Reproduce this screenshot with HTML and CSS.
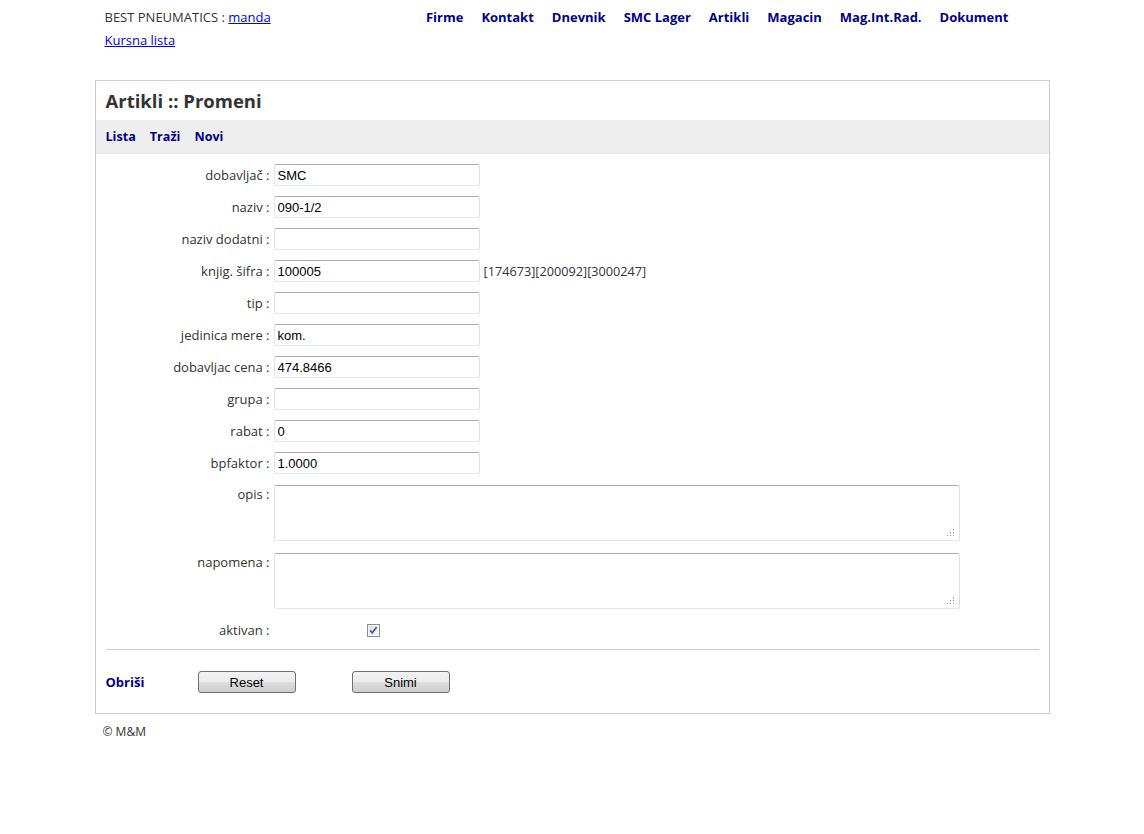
FILE: index.html
```html
<!DOCTYPE html>
<html lang="sr">
<head>
  <meta charset="UTF-8">
  <title>Artikli :: Promeni</title>
  <link rel="stylesheet" href="styles.css">
</head>
<body>
  <div class="page">
    <div class="header">
      <div class="user">
        BEST PNEUMATICS : <a href="#">manda</a><br>
        <a href="#">Kursna lista</a>
      </div>
      <ul class="nav">
        <li><a href="#">Firme</a></li>
        <li><a href="#">Kontakt</a></li>
        <li><a href="#">Dnevnik</a></li>
        <li><a href="#">SMC Lager</a></li>
        <li><a href="#">Artikli</a></li>
        <li><a href="#">Magacin</a></li>
        <li><a href="#">Mag.Int.Rad.</a></li>
        <li><a href="#">Dokument</a></li>
      </ul>
    </div>

    <div class="box">
      <h1>Artikli :: Promeni</h1>
      <div class="toolbar">
        <a href="#">Lista</a>
        <a href="#">Traži</a>
        <a href="#">Novi</a>
      </div>

      <form class="form">
        <div class="row"><label>dobavljač :</label><input type="text" value="SMC"></div>
        <div class="row"><label>naziv :</label><input type="text" value="090-1/2"></div>
        <div class="row"><label>naziv dodatni :</label><input type="text" value=""></div>
        <div class="row"><label>knjig. šifra :</label><input type="text" value="100005"><span class="extra">[174673][200092][3000247]</span></div>
        <div class="row"><label>tip :</label><input type="text" value=""></div>
        <div class="row"><label>jedinica mere :</label><input type="text" value="kom."></div>
        <div class="row"><label>dobavljac cena :</label><input type="text" value="474.8466"></div>
        <div class="row"><label>grupa :</label><input type="text" value=""></div>
        <div class="row"><label>rabat :</label><input type="text" value="0"></div>
        <div class="row"><label>bpfaktor :</label><input type="text" value="1.0000"></div>
        <div class="row tall first">
          <label>opis :</label>
          <span class="area">
            <textarea></textarea>
            <svg class="grip" width="7" height="7" viewBox="0 0 7 7">
              <rect x="6" y="0" width="1" height="1"/>
              <rect x="3" y="3" width="1" height="1"/><rect x="6" y="3" width="1" height="1"/>
              <rect x="0" y="6" width="1" height="1"/><rect x="3" y="6" width="1" height="1"/><rect x="6" y="6" width="1" height="1"/>
              <rect x="6" y="1" width="1" height="1" opacity=".5"/>
              <rect x="3" y="4" width="1" height="1" opacity=".5"/><rect x="6" y="4" width="1" height="1" opacity=".5"/>
            </svg>
          </span>
        </div>
        <div class="row tall">
          <label>napomena :</label>
          <span class="area">
            <textarea></textarea>
            <svg class="grip" width="7" height="7" viewBox="0 0 7 7">
              <rect x="6" y="0" width="1" height="1"/>
              <rect x="3" y="3" width="1" height="1"/><rect x="6" y="3" width="1" height="1"/>
              <rect x="0" y="6" width="1" height="1"/><rect x="3" y="6" width="1" height="1"/><rect x="6" y="6" width="1" height="1"/>
              <rect x="6" y="1" width="1" height="1" opacity=".5"/>
              <rect x="3" y="4" width="1" height="1" opacity=".5"/><rect x="6" y="4" width="1" height="1" opacity=".5"/>
            </svg>
          </span>
        </div>
        <div class="row">
          <label>aktivan :</label>
          <span class="check">
            <svg width="13" height="13" viewBox="0 0 13 13">
              <defs>
                <linearGradient id="cb" x1="0" y1="0" x2="1" y2="1">
                  <stop offset="0" stop-color="#dcdcdc"/>
                  <stop offset="1" stop-color="#f8f8f8"/>
                </linearGradient>
              </defs>
              <rect x="0.5" y="0.5" width="12" height="12" fill="#fff" stroke="#8e8f8f"/>
              <rect x="2" y="2" width="9" height="9" fill="url(#cb)"/>
              <path d="M3.2 6.4 L5.2 8.8 L9.6 3.2" fill="none" stroke="#3b54a0" stroke-width="1.6"/>
            </svg>
          </span>
        </div>
      </form>

      <hr class="sep">

      <div class="actions">
        <a href="#" class="delete">Obriši</a>
        <button type="button" class="btn">Reset</button>
        <button type="button" class="btn">Snimi</button>
      </div>
    </div>

    <div class="footer">© M&amp;M</div>
  </div>
</body>
</html>
```

FILE: styles.css
```css
body {
  margin: 0;
  background: #fff;
  color: #333;
  font-family: "Trebuchet MS", "Open Sans", sans-serif;
  font-size: 12px;
}

a {
  color: #0000ee;
}

.page {
  width: 955px;
  margin: 0 auto;
}

/* header */
.header {
  display: flex;
  justify-content: space-between;
  height: 46px;
  padding: 6px 41px 0 10px;
  line-height: 23px;
}

.user {
  font-size: 13px;
}

.nav {
  display: flex;
  gap: 18px;
  margin: 0;
  padding: 0;
  list-style: none;
}

.nav a {
  color: #00008b;
  font-weight: bold;
  font-size: 13px;
  text-decoration: none;
}

/* main box */
.box {
  margin-top: 28px;
  border: 1px solid #ccc;
  padding-bottom: 20px;
}

.box h1 {
  margin: 0;
  padding: 0 10px;
  height: 39px;
  line-height: 39px;
  font-size: 18.5px;
  font-weight: bold;
  color: #333;
}

.toolbar {
  display: flex;
  gap: 14px;
  height: 34px;
  padding: 0 10px;
  line-height: 34px;
  background: #eee;
}

.toolbar a,
.delete {
  color: #00008b;
  font-weight: bold;
  font-size: 13px;
  text-decoration: none;
}

.toolbar a {
  font-size: 12.6px;
}

/* form */
.form {
  display: flex;
  flex-direction: column;
  gap: 10px;
  margin: 0;
  padding: 10px 10px 0;
}

.row {
  display: flex;
  align-items: center;
  gap: 4px;
}

.row label {
  width: 164px;
  text-align: right;
  line-height: 22px;
  font-size: 13px;
}

.row.tall {
  align-items: flex-start;
  margin-top: 2px;
}

.row.tall.first {
  margin-top: 1px;
}

.row.tall label {
  line-height: 18px;
}

.row input,
.row textarea {
  box-sizing: border-box;
  margin: 0;
  padding: 1px 3px;
  border: 1px solid;
  border-color: #abadb3 #dbdfe6 #e3e9ef #e2e3ea;
  border-radius: 2px;
  font-family: "Liberation Sans", Arial, sans-serif;
  font-size: 13px;
  color: #000;
  background: #fff;
}

.row input {
  width: 206px;
  height: 22px;
}

.area {
  position: relative;
  display: flex;
}

.row textarea {
  width: 686px;
  height: 56px;
  resize: none;
}

.grip {
  position: absolute;
  right: 6px;
  bottom: 5px;
  fill: #9a9a9a;
}

.extra {
  font-size: 12.7px;
  color: #333;
}

.check {
  display: flex;
  margin-left: 93px;
}

.sep {
  margin: 8px 10px 0;
  border: 0;
  border-top: 1px solid #ccc;
  height: 0;
}

/* bottom buttons */
.actions {
  display: flex;
  align-items: center;
  margin-top: 21px;
  padding: 0 10px;
}

.delete {
  width: 92px;
}

.btn {
  width: 98px;
  height: 22px;
  margin-right: 56px;
  padding: 0;
  border: 1px solid #707070;
  border-radius: 3px;
  background: linear-gradient(#f2f2f2 0%, #ebebeb 50%, #dddddd 50%, #cfcfcf 100%);
  font-family: "Liberation Sans", Arial, sans-serif;
  font-size: 13px;
  color: #000;
}

.footer {
  padding: 9px 8px 0;
  line-height: 18px;
  font-size: 12px;
}
```
